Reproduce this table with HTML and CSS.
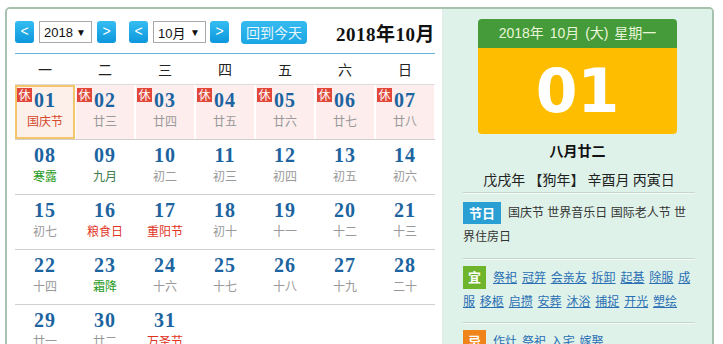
FILE: index.html
```html
<!DOCTYPE html>
<html lang="zh-CN">
<head>
<meta charset="utf-8">
<title>2018年10月 日历</title>
<link rel="stylesheet" href="styles.css">
</head>
<body>
<div class="wrap">
  <div class="cal">
    <div class="nav">
      <span class="btn">&lt;</span>
      <span class="sel"><span>2018</span><span class="arr">▼</span></span>
      <span class="btn">&gt;</span>
      <span class="btn g1">&lt;</span>
      <span class="sel"><span>10月</span><span class="arr">▼</span></span>
      <span class="btn g2">&gt;</span>
      <span class="today">回到今天</span>
      <span class="title">2018年10月</span>
    </div>
    <div class="rule"></div>
    <div class="week">
      <span>一</span><span>二</span><span>三</span><span>四</span><span>五</span><span>六</span><span>日</span>
    </div>
    <div class="grid">
      <div class="cell hol cur"><i class="rest">休</i><div class="d">01</div><div class="l red">国庆节</div></div>
      <div class="cell hol"><i class="rest">休</i><div class="d">02</div><div class="l">廿三</div></div>
      <div class="cell hol"><i class="rest">休</i><div class="d">03</div><div class="l">廿四</div></div>
      <div class="cell hol"><i class="rest">休</i><div class="d">04</div><div class="l">廿五</div></div>
      <div class="cell hol"><i class="rest">休</i><div class="d">05</div><div class="l">廿六</div></div>
      <div class="cell hol"><i class="rest">休</i><div class="d">06</div><div class="l">廿七</div></div>
      <div class="cell hol"><i class="rest">休</i><div class="d">07</div><div class="l">廿八</div></div>

      <div class="cell"><div class="d">08</div><div class="l grn">寒露</div></div>
      <div class="cell"><div class="d">09</div><div class="l mon">九月</div></div>
      <div class="cell"><div class="d">10</div><div class="l">初二</div></div>
      <div class="cell"><div class="d">11</div><div class="l">初三</div></div>
      <div class="cell"><div class="d">12</div><div class="l">初四</div></div>
      <div class="cell"><div class="d">13</div><div class="l">初五</div></div>
      <div class="cell"><div class="d">14</div><div class="l">初六</div></div>

      <div class="cell"><div class="d">15</div><div class="l">初七</div></div>
      <div class="cell"><div class="d">16</div><div class="l red">粮食日</div></div>
      <div class="cell"><div class="d">17</div><div class="l red">重阳节</div></div>
      <div class="cell"><div class="d">18</div><div class="l">初十</div></div>
      <div class="cell"><div class="d">19</div><div class="l">十一</div></div>
      <div class="cell"><div class="d">20</div><div class="l">十二</div></div>
      <div class="cell"><div class="d">21</div><div class="l">十三</div></div>

      <div class="cell"><div class="d">22</div><div class="l">十四</div></div>
      <div class="cell"><div class="d">23</div><div class="l grn">霜降</div></div>
      <div class="cell"><div class="d">24</div><div class="l">十六</div></div>
      <div class="cell"><div class="d">25</div><div class="l">十七</div></div>
      <div class="cell"><div class="d">26</div><div class="l">十八</div></div>
      <div class="cell"><div class="d">27</div><div class="l">十九</div></div>
      <div class="cell"><div class="d">28</div><div class="l">二十</div></div>

      <div class="cell"><div class="d">29</div><div class="l">廿一</div></div>
      <div class="cell"><div class="d">30</div><div class="l">廿二</div></div>
      <div class="cell"><div class="d">31</div><div class="l red">万圣节</div></div>
      <div class="cell"></div>
      <div class="cell"></div>
      <div class="cell"></div>
      <div class="cell"></div>
    </div>
  </div>
  <div class="side">
    <div class="card">
      <div class="card-top">2018年 10月 (大) 星期一</div>
      <div class="card-day">01</div>
    </div>
    <div class="lunar">八月廿二</div>
    <div class="gz">戊戌年 【狗年】 辛酉月 丙寅日</div>
    <div class="sec s1"><span class="tag blue">节日</span>国庆节 世界音乐日 国际老人节 世界住房日</div>
    <div class="sec s2"><span class="tag green">宜</span><a href="#">祭祀</a> <a href="#">冠笄</a> <a href="#">会亲友</a> <a href="#">拆卸</a> <a href="#">起基</a> <a href="#">除服</a> <a href="#">成服</a> <a href="#">移柩</a> <a href="#">启攒</a> <a href="#">安葬</a> <a href="#">沐浴</a> <a href="#">捕捉</a> <a href="#">开光</a> <a href="#">塑绘</a></div>
    <div class="sec s3"><span class="tag orange">忌</span><a href="#">作灶</a> <a href="#">祭祀</a> <a href="#">入宅</a> <a href="#">嫁娶</a></div>
  </div>
</div>
</body>
</html>
```
FILE: styles.css
```css
html, body {
  margin: 0;
  padding: 0;
  background: #fff;
  overflow: hidden;
}
body {
  font-family: "Liberation Sans", "Noto Sans CJK SC", sans-serif;
  color: #222;
}
.wrap {
  margin: 7px 0 0 5px;
  width: 709px;
  height: 420px;
  box-sizing: border-box;
  border: 2px solid #a6c1ae;
  border-radius: 5px;
  display: flex;
  overflow: hidden;
}
.cal {
  width: 436px;
  box-sizing: border-box;
  padding: 11px 7px 0 8px;
  background: #fff;
  border-right: 1px solid #e3ece7;
}
.nav {
  display: flex;
  align-items: center;
  height: 24px;
}
.btn {
  width: 19px;
  height: 22px;
  box-sizing: border-box;
  border-radius: 3px;
  background: linear-gradient(#35bdf2, #0d97dc);
  color: #fff;
  font-size: 14px;
  line-height: 21px;
  text-align: center;
  margin-right: 5px;
}
.btn.g1 { margin-left: 8px; }
.btn.g2 { margin-left: -1px; }
.sel {
  width: 53px;
  height: 22px;
  box-sizing: border-box;
  border: 1px solid #a9a9a9;
  background: #fff;
  display: flex;
  align-items: center;
  justify-content: space-between;
  padding: 0 5px 0 4px;
  font-size: 13px;
  color: #111;
  margin-right: 5px;
}
.arr { font-size: 10px; }
.today {
  margin-left: 7px;
  width: 66px;
  height: 23px;
  box-sizing: border-box;
  border-radius: 4px;
  background: linear-gradient(#36bbef, #1ba6e4);
  color: #e6f6ff;
  font-size: 14px;
  line-height: 23px;
  text-align: center;
  font-family: "Noto Sans CJK SC", sans-serif;
}
.title {
  margin-left: auto;
  font-family: "Liberation Serif", "Noto Sans CJK SC", serif;
  font-weight: bold;
  font-size: 19px;
  letter-spacing: 0.5px;
  color: #111;
}
.rule {
  margin-top: 9px;
  height: 1px;
  background: #62b4dc;
}
.week {
  display: grid;
  grid-template-columns: repeat(7, 60px);
  height: 30px;
  border-bottom: 1px solid #dcdcdc;
  font-family: "Noto Sans CJK SC", sans-serif;
  font-size: 14px;
  line-height: 30px;
  text-align: center;
  color: #222;
}
.grid {
  display: grid;
  grid-template-columns: repeat(7, 60px);
  grid-auto-rows: 55px;
}
.cell {
  position: relative;
  box-sizing: border-box;
  border-bottom: 1px solid #cfcfcf;
  padding-top: 5px;
  text-align: center;
}
.cell.hol {
  background: #fdeded;
  box-shadow: inset 1px 0 #fff, inset -1px 0 #fff;
}
.cell.cur {
  background: #fdf0ea;
  box-shadow: inset 0 0 0 2px #f3c66b;
}
.rest {
  position: absolute;
  top: 3px;
  left: 2px;
  width: 15px;
  height: 14px;
  background: #e2483a;
  color: #fff;
  font-style: normal;
  font-size: 12px;
  line-height: 14px;
  text-align: center;
  font-family: "Noto Sans CJK SC", sans-serif;
}
.d {
  font-family: "Liberation Serif", serif;
  font-weight: bold;
  font-size: 20px;
  letter-spacing: 1px;
  line-height: 20px;
  color: #1c64a0;
}
.l {
  margin-top: 2px;
  line-height: 18px;
  font-size: 12px;
  color: #999;
  font-family: "Noto Sans CJK SC", sans-serif;
}
.l.red { color: #e0341f; }
.cur .l.red { color: #d4482c; }
.l.grn { color: #1f9a22; }
.l.mon { color: #3d7a48; }

.side {
  width: 269px;
  box-sizing: border-box;
  padding: 10px 17px 0 20px;
  background: #dff2e9;
}
.card {
  width: 199px;
  margin: 0 0 0 15px;
  border-radius: 4px;
  overflow: hidden;
}
.card-top {
  height: 29px;
  background: #459a3a;
  color: #eaf6d8;
  font-size: 14px;
  word-spacing: 2px;
  line-height: 29px;
  text-align: center;
}
.card-day {
  height: 86px;
  background: #ffbd00;
  color: #fff;
  font-family: "DejaVu Sans", sans-serif;
  font-weight: bold;
  font-size: 60px;
  line-height: 86px;
  text-align: center;
}
.lunar {
  margin-top: 6px;
  line-height: 20px;
  font-size: 14px;
  font-weight: bold;
  text-align: center;
  color: #111;
  font-family: "Noto Sans CJK SC", sans-serif;
  padding-left: 15px;
  width: 199px;
}
.gz {
  margin-top: 9px;
  line-height: 20px;
  font-size: 14px;
  text-align: center;
  color: #222;
  font-family: "Noto Sans CJK SC", sans-serif;
}
.sec {
  border-top: 1px solid #c6d6cd;
  box-shadow: inset 0 1px 0 #f4fbf7;
  font-size: 12px;
  line-height: 24px;
  color: #333;
}
.s1 { margin-top: 3px; padding: 8px 0 9px; }
.s2 { padding: 7px 0 8px; word-spacing: 1.5px; }
.s3 { padding: 7px 0 8px; word-spacing: 1.5px; }
.tag {
  display: inline-block;
  vertical-align: top;
  margin: 1px 7px 0 0;
  height: 22px;
  padding: 0 6px;
  color: #fff;
  font-weight: bold;
  font-size: 13px;
  line-height: 22px;
  word-spacing: 0;
  font-family: "Noto Sans CJK SC", sans-serif;
}
.tag.blue { background: #2a9fd4; }
.tag.green { background: #6fb52c; padding: 0 5px; height: 23px; margin-top: 0; }
.tag.orange { background: #f0831a; padding: 0 5px; height: 23px; margin-top: 0; }
.sec a {
  color: #2a6fb4;
  text-decoration: underline;
}
```
